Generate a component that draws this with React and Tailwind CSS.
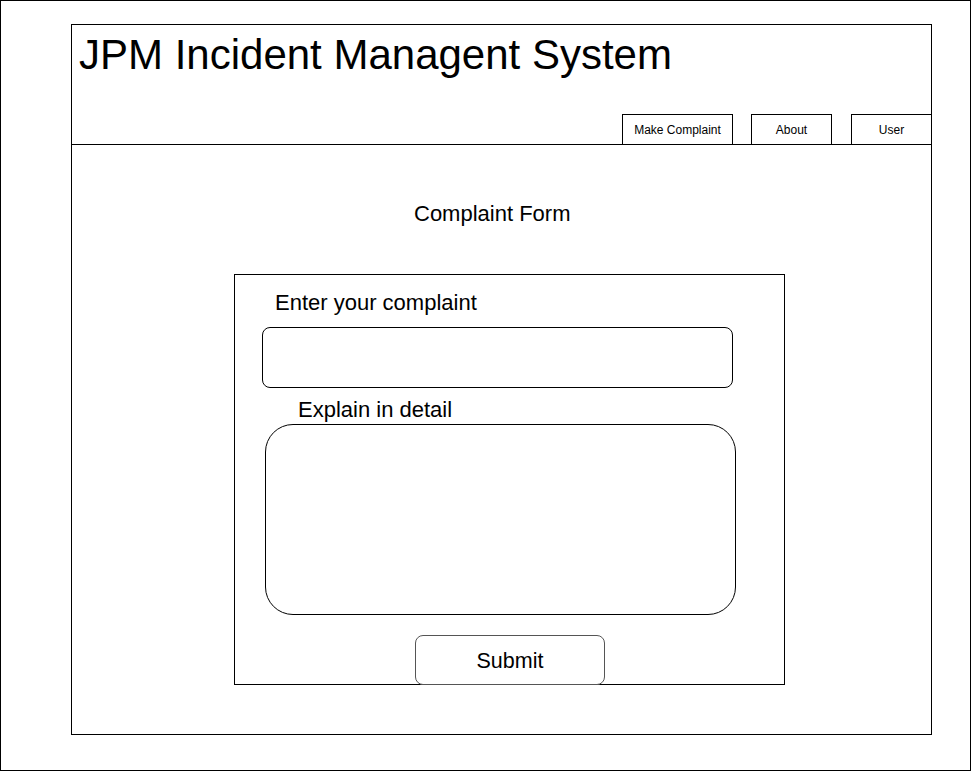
import React from 'react';

const font = { fontFamily: '"Liberation Sans", Arial, sans-serif' };

const NavButton = ({ label, className }) => (
  <div className={`h-[30px] border-t border-black flex items-center justify-center text-[12px] leading-none text-black ${className}`}>
    {label}
  </div>
);

const App = () => {
  return (
    <div className="w-[971px] h-[771px] border border-black bg-white text-black" style={font}>
      <div className="ml-[70px] mt-[23px] w-[861px] h-[711px] border border-black">
        {/* Header */}
        <div className="h-[120px] border-b border-black flex flex-col">
          <h1 className="pl-[7px] pt-[9px] text-[42px] leading-[42px] font-normal">JPM Incident Managent System</h1>
          <div className="mt-auto flex justify-end">
            <NavButton label="Make Complaint" className="w-[111px] border-x" />
            <NavButton label="About" className="w-[81px] border-x ml-[18px]" />
            <NavButton label="User" className="w-[80px] border-l ml-[19px]" />
          </div>
        </div>

        {/* Main */}
        <div className="pt-[58px]">
          <h2 className="ml-[342px] text-[22px] leading-[22px] font-normal">Complaint Form</h2>

          <div className="ml-[162px] mt-[49px] w-[551px] h-[411px] border border-black flex flex-col">
            <label className="shrink-0 ml-[40px] mt-[17px] text-[22px] leading-[22px]">Enter your complaint</label>
            <div className="shrink-0 ml-[27px] mt-[13px] w-[471px] h-[61px] border border-black rounded-[8px]" />

            <label className="shrink-0 ml-[63px] mt-[11px] text-[22px] leading-[22px]">Explain in detail</label>
            <div className="shrink-0 ml-[30px] mt-[3px] w-[471px] h-[191px] border border-black rounded-[28px]" />

            <button className="shrink-0 ml-[180px] mt-[20px] w-[190px] h-[50px] pt-[3px] border border-[#555] rounded-[8px] bg-white text-[21.5px] leading-none flex items-center justify-center">
              Submit
            </button>
          </div>
        </div>
      </div>
    </div>
  );
};

export default App;
